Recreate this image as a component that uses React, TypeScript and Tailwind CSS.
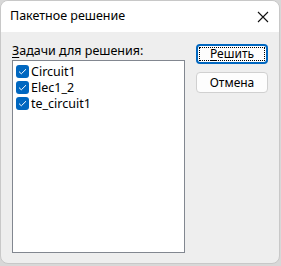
import React from 'react';

const tasks = ['Circuit1', 'Elec1_2', 'te_circuit1'];

function CheckBox() {
  return (
    <span className="w-[13px] h-[13px] rounded-[3px] bg-[#0067c0] flex items-center justify-center shrink-0">
      <svg width="9" height="7" viewBox="0 0 9 7" fill="none">
        <path d="M1 3.6 L3.3 5.8 L8 1.2" stroke="white" strokeWidth="1" />
      </svg>
    </span>
  );
}

export default function App() {
  return (
    <div
      className="w-[281px] h-[266px] bg-[#d8d8d8] text-[12px] text-black"
      style={{ fontFamily: '"Segoe UI", "Noto Sans", sans-serif' }}
    >
      <div className="w-[280px] h-[264px] rounded-[8px] border border-[#c8c8c8] bg-[#eeeeee] overflow-hidden flex flex-col">
        <div className="h-[31px] bg-white flex items-center justify-between pl-[9px] pr-[9px] shrink-0">
          <span className="text-[12.5px] leading-none">Пакетное решение</span>
          <svg width="12" height="12" viewBox="0 0 12 12" className="mr-[1px]">
            <path d="M1 1 L11 11 M11 1 L1 11" stroke="#111" strokeWidth="1.1" />
          </svg>
        </div>
        <div className="flex flex-1 pl-[11px] pr-[11px] pt-[10px] pb-[10px] gap-[11px]">
          <div className="flex flex-col w-[174px]">
            <div className="h-[17px] leading-[17px] mb-[1px] text-[12.5px]">
              <span className="underline underline-offset-2">З</span>адачи для решения:
            </div>
            <div className="flex-1 bg-white border border-[#828790] pt-[3px] pl-[3px] flex flex-col gap-[1px] text-[12.5px]">
              {tasks.map((t) => (
                <div key={t} className="h-[15px] flex items-center gap-[2px]">
                  <CheckBox />
                  <span className="leading-[14px]">{t}</span>
                </div>
              ))}
            </div>
          </div>
          <div className="flex flex-col gap-[8px] pt-[2px]">
            <button className="w-[72px] h-[20px] rounded-[4px] border-2 border-[#0067c0] bg-[#fdfdfd] p-[1px]">
              <span className="w-full h-full flex items-center justify-center border border-dotted border-black">
                <span>
                  <span className="underline underline-offset-2">Р</span>ешить
                </span>
              </span>
            </button>
            <button className="w-[72px] h-[21px] rounded-[4px] border border-[#d0d0d0] bg-[#fdfdfd] flex items-center justify-center">
              Отмена
            </button>
          </div>
        </div>
      </div>
    </div>
  );
}
